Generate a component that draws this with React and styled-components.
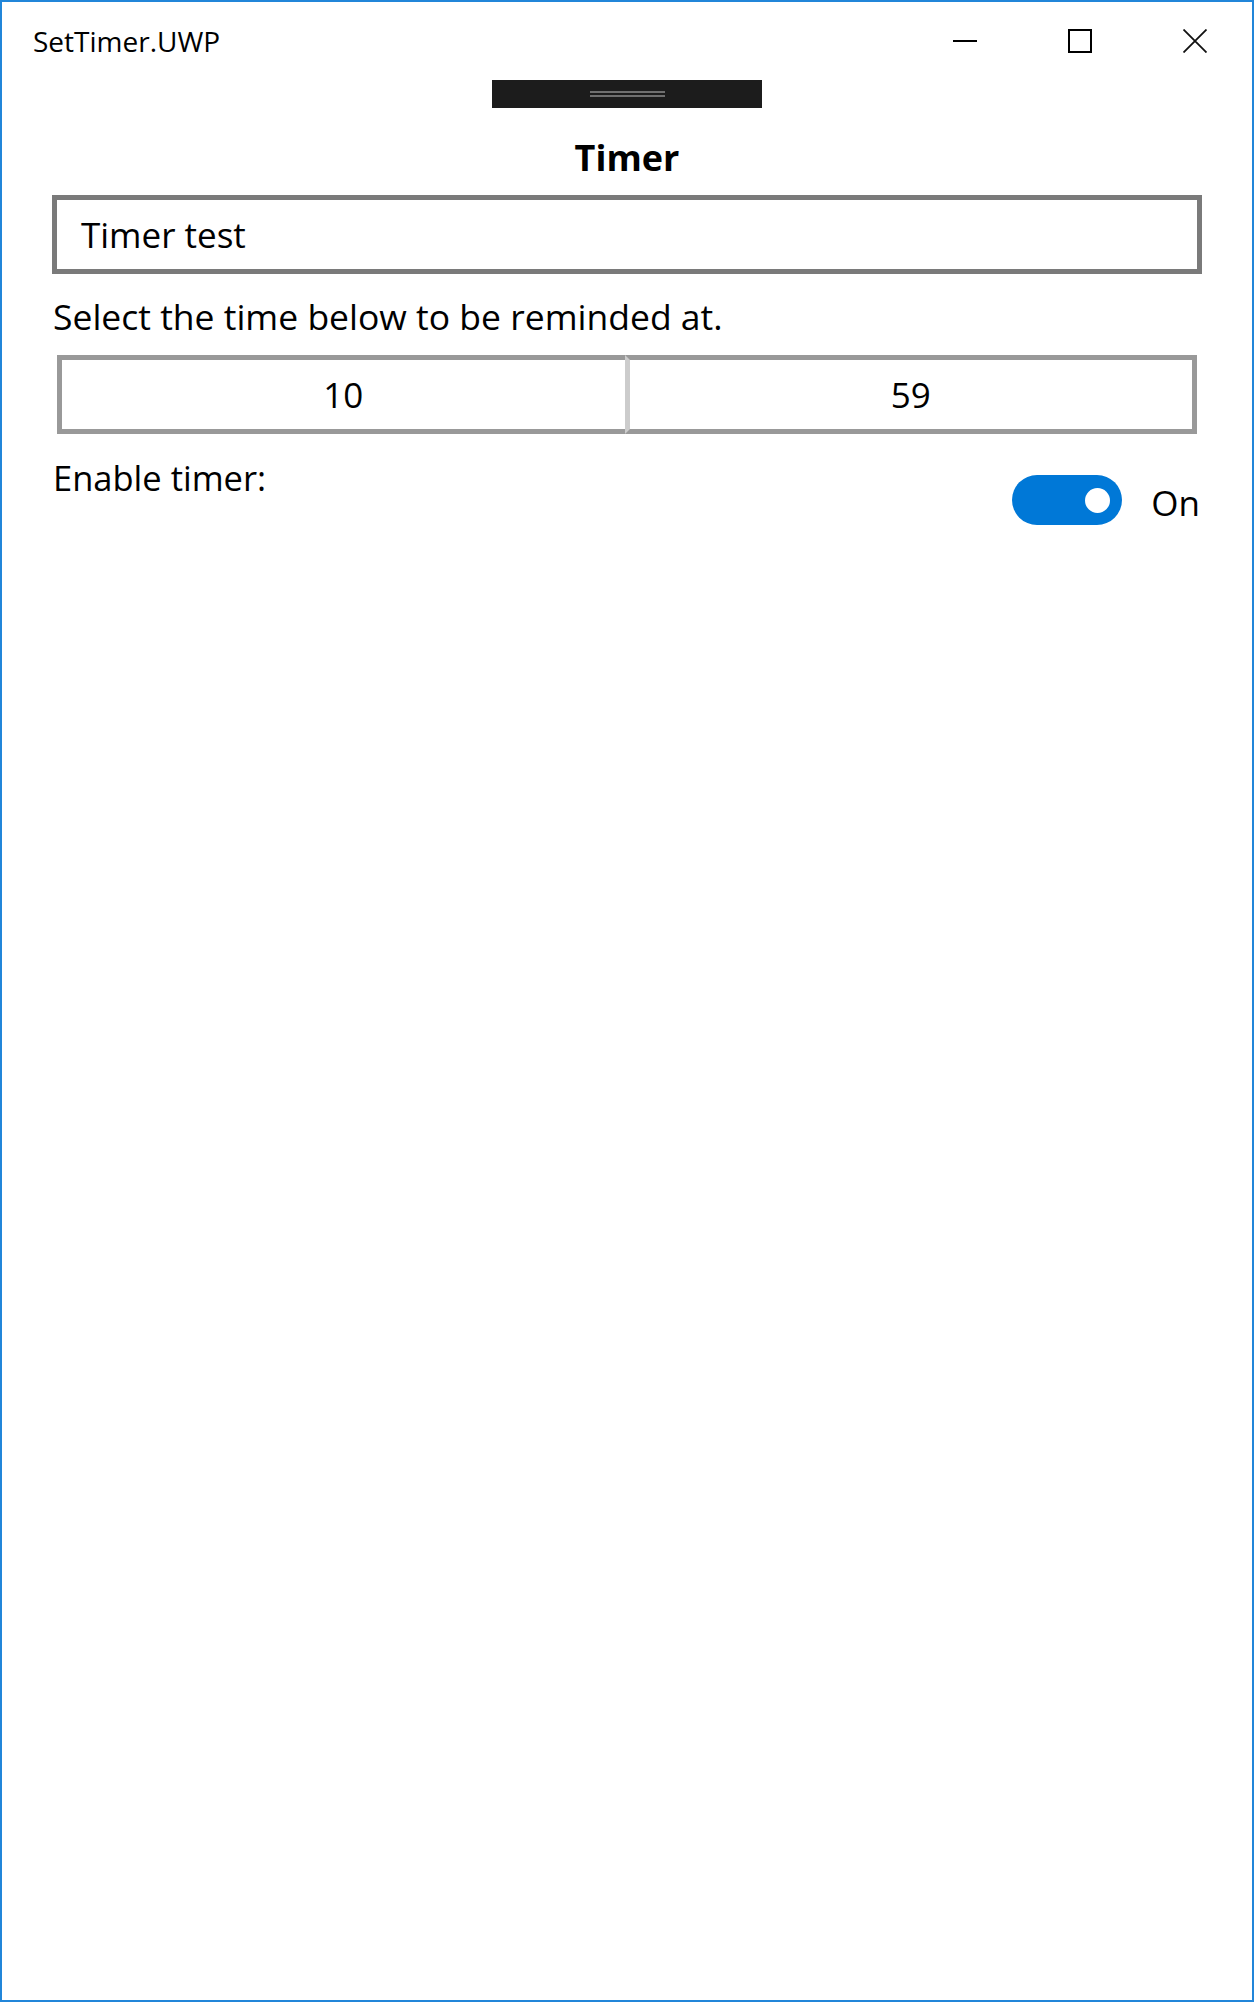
import React from 'react';
import styled, { createGlobalStyle } from 'styled-components';

const GlobalStyle = createGlobalStyle`
  html, body {
    margin: 0;
    padding: 0;
    background: #ffffff;
  }
  body {
    font-family: 'Open Sans', 'Noto Sans', 'Liberation Sans', sans-serif;
    color: #000000;
  }
  * {
    box-sizing: border-box;
  }
`;

const WindowFrame = styled.div`
  width: 1254px;
  height: 2002px;
  border: 2px solid #2186d9;
  background: #ffffff;
  display: flex;
  flex-direction: column;
`;

const TitleBar = styled.div`
  display: flex;
  align-items: center;
  justify-content: space-between;
  height: 78px;
`;

const WindowTitle = styled.span`
  padding-left: 31px;
  font-size: 28px;
  color: #000000;
`;

const CaptionButtons = styled.div`
  display: flex;
  height: 100%;
`;

const CaptionButton = styled.div`
  width: 115px;
  height: 100%;
  display: flex;
  align-items: center;
  justify-content: center;
`;

const DragStrip = styled.div`
  align-self: center;
  width: 270px;
  height: 28px;
  background: #1c1c1c;
  display: flex;
  flex-direction: column;
  align-items: center;
  justify-content: center;
  gap: 2px;
`;

const GripLine = styled.div`
  width: 75px;
  height: 2px;
  background: #6f6f6f;
`;

const Content = styled.div`
  display: flex;
  flex-direction: column;
  padding: 0 50px;
`;

const PageHeading = styled.h1`
  margin: 27px 0 0;
  text-align: center;
  font-size: 36px;
  line-height: 46px;
  font-weight: 700;
`;

const EntryBox = styled.div`
  margin-top: 14px;
  height: 79px;
  border: 5px solid #7a7a7a;
  display: flex;
  align-items: center;
  padding-left: 24px;
  font-size: 35px;
  line-height: 69px;
`;

const BodyText = styled.p`
  margin: ${({ mt }) => mt || 0}px 0 0;
  font-size: ${({ fs }) => fs || 35}px;
  line-height: 48px;
  padding-left: 1px;
`;

const TimePicker = styled.div`
  margin: 15px 5px 0;
  height: 79px;
  display: flex;
`;

const TimeCell = styled.div`
  flex: 1;
  display: flex;
  align-items: center;
  justify-content: center;
  border: 5px solid #999999;
  border-left-color: ${({ divided }) => (divided ? '#cccccc' : '#999999')};
  border-right-width: ${({ divided }) => (divided ? '5px' : '0')};
  font-size: 35px;
  line-height: 69px;
`;

const SettingRow = styled.div`
  display: flex;
  justify-content: space-between;
  align-items: flex-start;
`;

const SwitchGroup = styled.div`
  margin-top: 38px;
  display: flex;
  align-items: center;
  gap: 29px;
  padding-right: 2px;
`;

const SwitchTrack = styled.div`
  width: 110px;
  height: 50px;
  border-radius: 25px;
  background: ${({ on }) => (on ? '#0078d7' : '#ffffff')};
  display: flex;
  align-items: center;
  justify-content: ${({ on }) => (on ? 'flex-end' : 'flex-start')};
  padding: 0 12px;
`;

const SwitchKnob = styled.div`
  width: 25px;
  height: 25px;
  border-radius: 50%;
  background: #ffffff;
`;

const SwitchLabel = styled.span`
  font-size: 35px;
  line-height: 50px;
  padding-top: 6px;
`;

const MinimizeIcon = () => (
  <svg width="24" height="24" viewBox="0 0 24 24">
    <line x1="0" y1="12" x2="24" y2="12" stroke="#000" strokeWidth="2" />
  </svg>
);

const MaximizeIcon = () => (
  <svg width="24" height="24" viewBox="0 0 24 24">
    <rect x="1" y="1" width="22" height="22" fill="none" stroke="#000" strokeWidth="2" />
  </svg>
);

const CloseIcon = () => (
  <svg width="24" height="24" viewBox="0 0 24 24">
    <path d="M0.5 0.5 L23.5 23.5 M23.5 0.5 L0.5 23.5" stroke="#111" strokeWidth="1.8" />
  </svg>
);

const App = () => {
  const timerOn = true;
  return (
    <>
      <GlobalStyle />
      <WindowFrame>
        <TitleBar>
          <WindowTitle>SetTimer.UWP</WindowTitle>
          <CaptionButtons>
            <CaptionButton>
              <MinimizeIcon />
            </CaptionButton>
            <CaptionButton>
              <MaximizeIcon />
            </CaptionButton>
            <CaptionButton>
              <CloseIcon />
            </CaptionButton>
          </CaptionButtons>
        </TitleBar>
        <DragStrip>
          <GripLine />
          <GripLine />
        </DragStrip>
        <Content>
          <PageHeading>Timer</PageHeading>
          <EntryBox>Timer test</EntryBox>
          <BodyText mt={18} fs={35.5}>
            Select the time below to be reminded at.
          </BodyText>
          <TimePicker>
            <TimeCell>10</TimeCell>
            <TimeCell divided>59</TimeCell>
          </TimePicker>
          <SettingRow>
            <BodyText mt={20} fs={34.5}>
              Enable timer:
            </BodyText>
            <SwitchGroup>
              <SwitchTrack on={timerOn}>
                <SwitchKnob />
              </SwitchTrack>
              <SwitchLabel>{timerOn ? 'On' : 'Off'}</SwitchLabel>
            </SwitchGroup>
          </SettingRow>
        </Content>
      </WindowFrame>
    </>
  );
};

export default App;
